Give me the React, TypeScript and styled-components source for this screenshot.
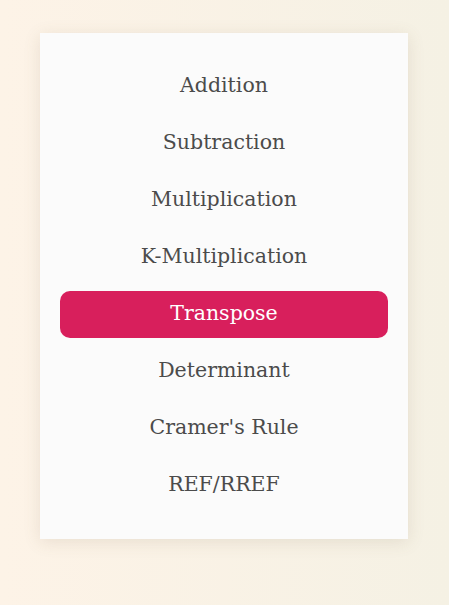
import React from "react";
import styled, { createGlobalStyle } from "styled-components";

const Global = createGlobalStyle`
  html, body { margin: 0; padding: 0; }
  body {
    min-height: 605px;
    background: linear-gradient(90deg, #fdf3e7 0%, #f5f1e4 100%);
    font-family: "DejaVu Serif", "Liberation Serif", serif;
  }
`;

const Page = styled.div`
  padding: 33px 41px 0 40px;
`;

const Card = styled.nav`
  background: #fbfbfb;
  box-shadow: 0 3px 16px rgba(120, 100, 70, 0.14);
  padding: 30px 20px 30px;
  display: flex;
  flex-direction: column;
  gap: 10px;
`;

const Item = styled.button<{ $active?: boolean }>`
  height: 47px;
  border: none;
  border-radius: 10px;
  font-family: inherit;
  font-size: 20.5px;
  color: ${(p) => (p.$active ? "#ffffff" : "#4b4b4b")};
  background: ${(p) => (p.$active ? "#d81f5c" : "transparent")};
  cursor: pointer;
  display: flex;
  align-items: center;
  justify-content: center;
  padding: 0 0 3px;
`;

const items = [
  "Addition",
  "Subtraction",
  "Multiplication",
  "K-Multiplication",
  "Transpose",
  "Determinant",
  "Cramer's Rule",
  "REF/RREF",
];

export default function App() {
  return (
    <>
      <Global />
      <Page>
        <Card>
          {items.map((t) => (
            <Item key={t} $active={t === "Transpose"}>
              {t}
            </Item>
          ))}
        </Card>
      </Page>
    </>
  );
}
